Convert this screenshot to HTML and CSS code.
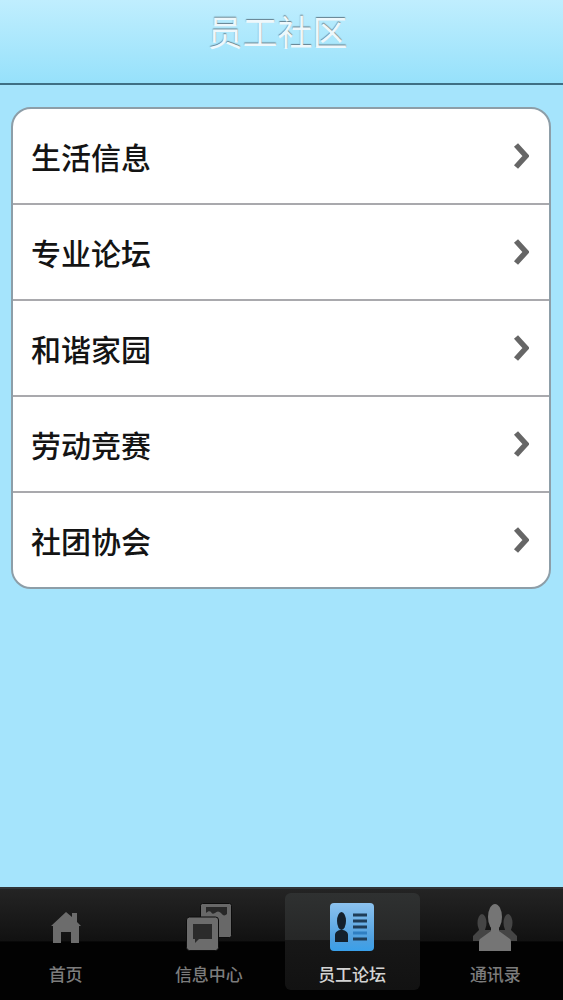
FILE: index.html
```html
<!DOCTYPE html>
<html lang="zh">
<head>
<meta charset="utf-8">
<title>员工社区</title>
<link rel="stylesheet" href="styles.css">
</head>
<body>
<div class="page">
  <header class="header"><h1 class="title">员工社区</h1></header>
  <main class="content">
    <ul class="list">
      <li class="row"><span>生活信息</span><svg class="chev" viewBox="0 0 16 28"><path d="M3 3l10 11L3 25"/></svg></li>
      <li class="row"><span>专业论坛</span><svg class="chev" viewBox="0 0 16 28"><path d="M3 3l10 11L3 25"/></svg></li>
      <li class="row"><span>和谐家园</span><svg class="chev" viewBox="0 0 16 28"><path d="M3 3l10 11L3 25"/></svg></li>
      <li class="row"><span>劳动竞赛</span><svg class="chev" viewBox="0 0 16 28"><path d="M3 3l10 11L3 25"/></svg></li>
      <li class="row"><span>社团协会</span><svg class="chev" viewBox="0 0 16 28"><path d="M3 3l10 11L3 25"/></svg></li>
    </ul>
  </main>
  <nav class="tabbar">
    <div class="tab">
      <svg class="icon" viewBox="0 0 46 48">
        <path fill="#6c6c6c" d="M23 9l6 5v-4h5v9l4 4h-2v17h-8V29h-10v11h-8V23H8z"/>
      </svg>
      <span class="label">首页</span>
    </div>
    <div class="tab">
      <svg class="icon" viewBox="0 0 46 48">
        <rect x="14.5" y="0.5" width="31" height="34" rx="2" fill="#686868" stroke="#0c0c0c"/>
        <path fill="#282828" d="M20 4h21v7c-2 2-4 2-6-1-2-2-4-2-6 0-2 1-3 1-4-1-1-1-3-1-5 1z"/>
        <rect x="0.5" y="14" width="32" height="33.5" rx="3" fill="#6c6c6c" stroke="#0c0c0c"/>
        <path fill="#2b2b2b" d="M7 21h19v15H13l-4 4v-4H7z"/>
      </svg>
      <span class="label">信息中心</span>
    </div>
    <div class="tab active">
      <svg class="icon" viewBox="0 0 46 48">
        <defs><linearGradient id="blue" x1="0" y1="0" x2="0" y2="1"><stop offset="0" stop-color="#8cc2ee"/><stop offset="0.78" stop-color="#4c9fe0"/><stop offset="1" stop-color="#39a0ea"/></linearGradient></defs>
        <rect x="1" y="0" width="44" height="48" rx="4" fill="url(#blue)"/>
        <ellipse cx="12.5" cy="18" rx="4.5" ry="9" fill="#14202c"/>
        <path fill="#14202c" d="M6 39V32c0-3 3-5 6.500-5S19 29 19 32v7z"/>
        <path fill="none" stroke="#1f3d58" stroke-width="3" d="M24 12h14M24 18h14M24 24h14M24 36h14"/>
        <path fill="none" stroke="#2f7fc2" stroke-width="3" d="M24 30h14"/>
      </svg>
      <span class="label">员工论坛</span>
    </div>
    <div class="tab">
      <svg class="icon" viewBox="0 0 46 48">
        <ellipse cx="10" cy="20" rx="4.500" ry="9" fill="#454545"/>
        <ellipse cx="36" cy="20" rx="4.500" ry="9" fill="#454545"/>
        <path fill="#454545" d="M7 27h32l6 6v5H1v-5z"/>
        <ellipse cx="23" cy="14" rx="7" ry="13" fill="#757575"/>
        <path fill="#757575" d="M19 25h8v3l11 8c1 1 1 2 1 4v8H7v-8c0-2 0-3 1-4l11-8z"/>
      </svg>
      <span class="label">通讯录</span>
    </div>
  </nav>
</div>
</body>
</html>
```
FILE: styles.css
```css
* { box-sizing: border-box; }
html, body { margin: 0; padding: 0; height: 100%; overflow: hidden; }
body {
  font-family: "Liberation Sans", "Noto Sans CJK SC", sans-serif;
  background: #a5e4fc;
}
.page { width: 563px; height: 1000px; display: flex; flex-direction: column; overflow: hidden; }
.header {
  height: 85px;
  flex: none;
  display: flex;
  justify-content: center;
  padding: 12px 8px 0 0;
  background: linear-gradient(#c0eefe, #96e1fb);
  border-bottom: 2px solid #3f6f84;
}
.title {
  margin: 0;
  font-size: 35px;
  line-height: 44px;
  font-weight: 400;
  color: #eef8fc;
  text-shadow: 0 -1px 1px #64808e;
}
.content { flex: 1; padding: 22px 12px 0 11px; background: #a5e4fc; }
.list {
  list-style: none;
  margin: 0;
  padding: 0;
  background: #fff;
  border: 2px solid #8d9ea8;
  border-radius: 20px;
  height: 482px;
  display: flex;
  flex-direction: column;
}
.row {
  flex: none;
  height: 96px;
  display: flex;
  align-items: center;
  justify-content: space-between;
  padding: 0 20px 0 18px;
  font-size: 30px;
  font-weight: 500;
  color: #141414;
  border-bottom: 2px solid #a9a9ad;
}
.row:last-child { border-bottom: 0; height: 94px; }
.chev { width: 16px; height: 28px; fill: none; stroke: #666; stroke-width: 5.500; }
.tabbar {
  flex: none;
  height: 113px;
  margin-left: -7px;
  width: 573px;
  padding: 4px 0 10px;
  display: grid;
  grid-template-columns: repeat(4, 143.25px);
  border-top: 2px solid #303437;
  background: linear-gradient(#242424 0, #111 47%, #020202 47.500%, #020202 100%);
}
.tab {
  display: flex;
  flex-direction: column;
  align-items: center;
  justify-content: space-between;
  padding: 10px 0 0;
  margin: 0 3px 0 5px;
  border-radius: 6px;
}
.tab.active { background: linear-gradient(#2f3131 0, #262727 48.500%, #171717 49%, #121212 100%); }
.icon { width: 46px; height: 48px; display: block; }
.label { font-size: 17px; font-weight: 500; line-height: 24px; color: #7c7c7c; margin-bottom: 2px; }
.active .label { color: #d4d4d4; }
```
